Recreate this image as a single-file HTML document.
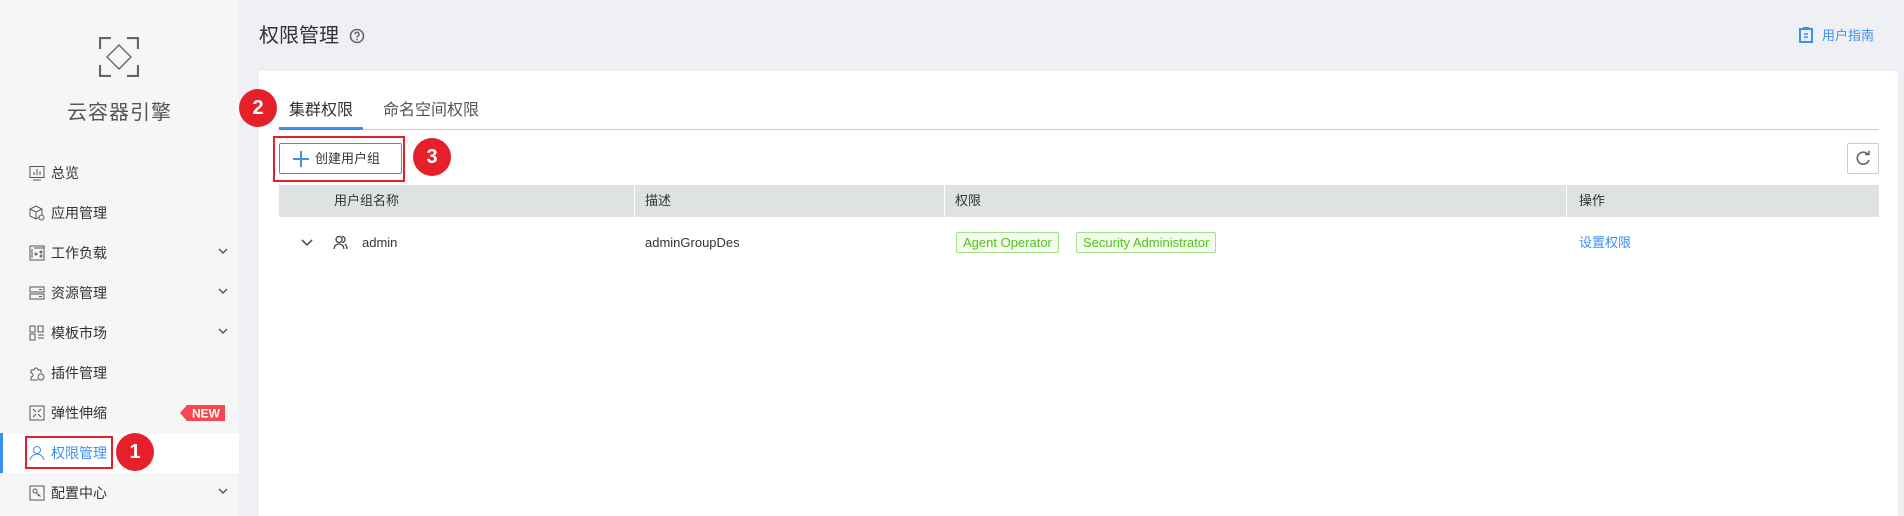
<!DOCTYPE html>
<html><head><meta charset="utf-8"><style>
*{margin:0;padding:0;box-sizing:border-box}
body{width:1904px;height:516px;overflow:hidden;background:#eef0f4;font-family:"Liberation Sans","Noto Sans CJK SC",sans-serif;color:#333;position:relative}
.abs{position:absolute}
#side{left:0;top:0;width:239px;height:516px;background:#f5f7f7}
.mi{position:absolute;left:0;width:239px;height:40px;font-size:14px;color:#333}
.mi .ic{position:absolute;left:29px;top:12px;width:16px;height:16px}
.mi .t{position:absolute;left:51px;top:11px;line-height:18px}
.mi .ch{position:absolute;left:217px;top:12px}
.badge{position:absolute;width:38px;height:38px;border-radius:50%;background:#e5202a;color:#fff;font-weight:bold;font-size:20px;text-align:center;line-height:38px;font-family:"Liberation Sans",sans-serif}
.th{position:absolute;top:185px;height:32px;background:#dfe2e3;font-size:13px;line-height:32px;color:#333}
.tag{position:absolute;top:232px;height:21px;border:1px solid #a6e08a;background:#f3fcef;color:#52c41a;font-size:13px;line-height:19px;padding:0 6px;border-radius:2px}
.r{line-height:16px;height:16px}
</style></head><body>
<div id="side" class="abs">
 <svg class="abs" style="left:99px;top:37px" width="40" height="40" viewBox="0 0 40 40" fill="none" stroke="#666" stroke-width="2.2"><path d="M1 12V1h11M28 1h11v11M39 28v11H28M12 39H1V28"/><path d="M20 8l12 12-12 12L8 20z" stroke-width="1.4"/></svg>
 <div class="abs" style="left:0;width:239px;top:96px;text-align:center;font-size:20px;color:#555;letter-spacing:1px">云容器引擎</div>
 <div class="mi" style="top:153px"><svg class="ic" viewBox="0 0 16 16" fill="none" stroke="#555"><rect x="1" y="1.5" width="14" height="11"/><path d="M5 10V7M8 10V4M11 10V6M4 15h8"/></svg><span class="t">总览</span></div>
 <div class="mi" style="top:193px"><svg class="ic" viewBox="0 0 16 16" fill="none" stroke="#555"><path d="M7 1L1 4v7l6 3 6-3V4zM1 4l6 3 6-3M7 7v7"/><circle cx="12.5" cy="12.5" r="2.5" fill="#f5f7f7"/></svg><span class="t">应用管理</span></div>
 <div class="mi" style="top:233px"><svg class="ic" viewBox="0 0 16 16" fill="none" stroke="#555"><rect x="1" y="1" width="14" height="14"/><path d="M3 4v9M5 3h10"/><circle cx="7" cy="9" r="1"/><circle cx="12" cy="7" r="1"/><circle cx="12" cy="11" r="1"/></svg><span class="t">工作负载</span><svg class="ch" width="12" height="12" viewBox="0 0 12 12"><path d="M2 4l4 4 4-4" stroke="#555" fill="none" stroke-width="1.4"/></svg></div>
 <div class="mi" style="top:273px"><svg class="ic" viewBox="0 0 16 16" fill="none" stroke="#555"><rect x="1" y="2" width="14" height="5"/><rect x="1" y="9" width="14" height="5"/><path d="M10 4.5h3M10 11.5h3"/></svg><span class="t">资源管理</span><svg class="ch" width="12" height="12" viewBox="0 0 12 12"><path d="M2 4l4 4 4-4" stroke="#555" fill="none" stroke-width="1.4"/></svg></div>
 <div class="mi" style="top:313px"><svg class="ic" viewBox="0 0 16 16" fill="none" stroke="#555"><rect x="1" y="1" width="5" height="6"/><rect x="9" y="1" width="5" height="6"/><rect x="1" y="9" width="5" height="6"/><path d="M9 10h6M9 13h6"/></svg><span class="t">模板市场</span><svg class="ch" width="12" height="12" viewBox="0 0 12 12"><path d="M2 4l4 4 4-4" stroke="#555" fill="none" stroke-width="1.4"/></svg></div>
 <div class="mi" style="top:353px"><svg class="ic" viewBox="0 0 16 16" fill="none" stroke="#555"><path d="M2 5h3a2 2 0 014 0h3v3M2 5v3a2 2 0 010 4v3h7"/><circle cx="12" cy="12" r="3"/></svg><span class="t">插件管理</span></div>
 <div class="mi" style="top:393px"><svg class="ic" viewBox="0 0 16 16" fill="none" stroke="#555"><rect x="1" y="1" width="14" height="14"/><path d="M4 4l3 3M12 4L9 7M4 12l3-3M12 12L9 9"/></svg><span class="t">弹性伸缩</span>
  <svg class="abs" style="left:180px;top:12px" width="45" height="16"><path d="M7 0H45V16H7L0 8z" fill="#f5484f"/><text x="26" y="12.5" fill="#fff" font-size="12" font-weight="bold" text-anchor="middle" font-family="Liberation Sans">NEW</text></svg></div>
 <div class="mi" style="top:433px;background:#fff"><div class="abs" style="left:0;top:0;width:3px;height:40px;background:#3b8ff0"></div><svg class="ic" viewBox="0 0 16 16" fill="none" stroke="#3b8ff0"><circle cx="8" cy="5" r="3.5"/><path d="M1 15c1-4 4-6 7-6s6 2 7 6"/></svg><span class="t" style="color:#3b8ff0">权限管理</span>
  <div class="abs" style="left:25px;top:3px;width:88px;height:33px;border:2px solid #e5202a"></div></div>
 <div class="mi" style="top:473px"><svg class="ic" viewBox="0 0 16 16" fill="none" stroke="#555"><rect x="1" y="1" width="14" height="14"/><circle cx="6" cy="6" r="2"/><path d="M7.5 7.5l4 4M10 10l-1 1"/></svg><span class="t">配置中心</span><svg class="ch" width="12" height="12" viewBox="0 0 12 12"><path d="M2 4l4 4 4-4" stroke="#555" fill="none" stroke-width="1.4"/></svg></div>
</div>
<div class="badge" style="left:116px;top:433px">1</div>

<div class="abs" style="left:259px;top:24px;font-size:20px;line-height:24px;color:#333">权限管理</div>
<svg class="abs" style="left:349px;top:28px" width="16" height="16" viewBox="0 0 16 16"><circle cx="8" cy="8" r="6.5" fill="none" stroke="#666" stroke-width="1.6"/><path d="M6 6.3a2 2 0 113 1.7c-.8.4-1 .8-1 1.6" fill="none" stroke="#666" stroke-width="1.5"/><circle cx="8" cy="11.6" r=".9" fill="#666"/></svg>
<svg class="abs" style="left:1799px;top:27px" width="14" height="16" viewBox="0 0 14 16"><rect x="1" y="2" width="12" height="13" fill="none" stroke="#3b8ff0" stroke-width="2"/><rect x="4" y="0" width="6" height="3" fill="#3b8ff0"/><path d="M5 7h4M5 10h4" stroke="#3b8ff0" stroke-width="1.5"/></svg>
<div class="abs r" style="left:1822px;top:28px;font-size:13px;color:#3b8ff0">用户指南</div>

<div class="abs" style="left:259px;top:71px;width:1639px;height:445px;background:#fff"></div>
<div class="abs" style="left:289px;top:101px;font-size:16px;line-height:20px;color:#333">集群权限</div>
<div class="abs" style="left:383px;top:101px;font-size:16px;line-height:20px;color:#555">命名空间权限</div>
<div class="abs" style="left:279px;top:129px;width:1600px;height:1px;background:#ccc"></div>
<div class="abs" style="left:279px;top:127px;width:84px;height:3px;background:#3b8ff0"></div>
<div class="badge" style="left:239px;top:89px">2</div>

<div class="abs" style="left:273px;top:136px;width:132px;height:46px;border:2px solid #e5202a"></div>
<div class="abs" style="left:279px;top:143px;width:123px;height:31px;border:1px solid #3b8ff0;border-radius:2px"></div>
<svg class="abs" style="left:293px;top:151px" width="16" height="16"><path d="M8 0v16M0 8h16" stroke="#3b8ff0" stroke-width="2"/></svg>
<div class="abs r" style="left:315px;top:151px;font-size:13px;color:#333">创建用户组</div>
<div class="badge" style="left:413px;top:138px">3</div>

<div class="abs" style="left:1847px;top:143px;width:32px;height:31px;border:1px solid #ccc;border-radius:2px"></div>
<svg class="abs" style="left:1855px;top:150px" width="16" height="17" viewBox="0 0 16 17"><path d="M13 4.5A6 6 0 1014 10" fill="none" stroke="#666" stroke-width="1.6"/><path d="M10 4.5h4V0.8" fill="none" stroke="#666" stroke-width="1.6"/></svg>

<div class="th" style="left:279px;width:355px;padding-left:55px">用户组名称</div>
<div class="th" style="left:635px;width:309px;padding-left:10px">描述</div>
<div class="th" style="left:945px;width:621px;padding-left:10px">权限</div>
<div class="th" style="left:1567px;width:312px;padding-left:12px">操作</div>

<svg class="abs" style="left:300px;top:238px" width="14" height="10"><path d="M2 2l5 5 5-5" stroke="#555" fill="none" stroke-width="1.6"/></svg>
<svg class="abs" style="left:333px;top:235px" width="15" height="15" viewBox="0 0 15 15" fill="none" stroke="#444" stroke-width="1.3"><circle cx="6" cy="4.5" r="3"/><path d="M1 14c.5-3.5 2.5-5 5-5s4.5 1.5 5 5M9 1.5a3 3 0 010 6M12 9c1 1 2 2.5 2 5"/></svg>
<div class="abs r" style="left:362px;top:235px;font-size:13px;color:#333">admin</div>
<div class="abs r" style="left:645px;top:235px;font-size:13px;color:#333">adminGroupDes</div>
<div class="tag" style="left:956px">Agent Operator</div>
<div class="tag" style="left:1076px">Security Administrator</div>
<div class="abs r" style="left:1579px;top:235px;font-size:13px;color:#3b8ff0">设置权限</div>
</body></html>
